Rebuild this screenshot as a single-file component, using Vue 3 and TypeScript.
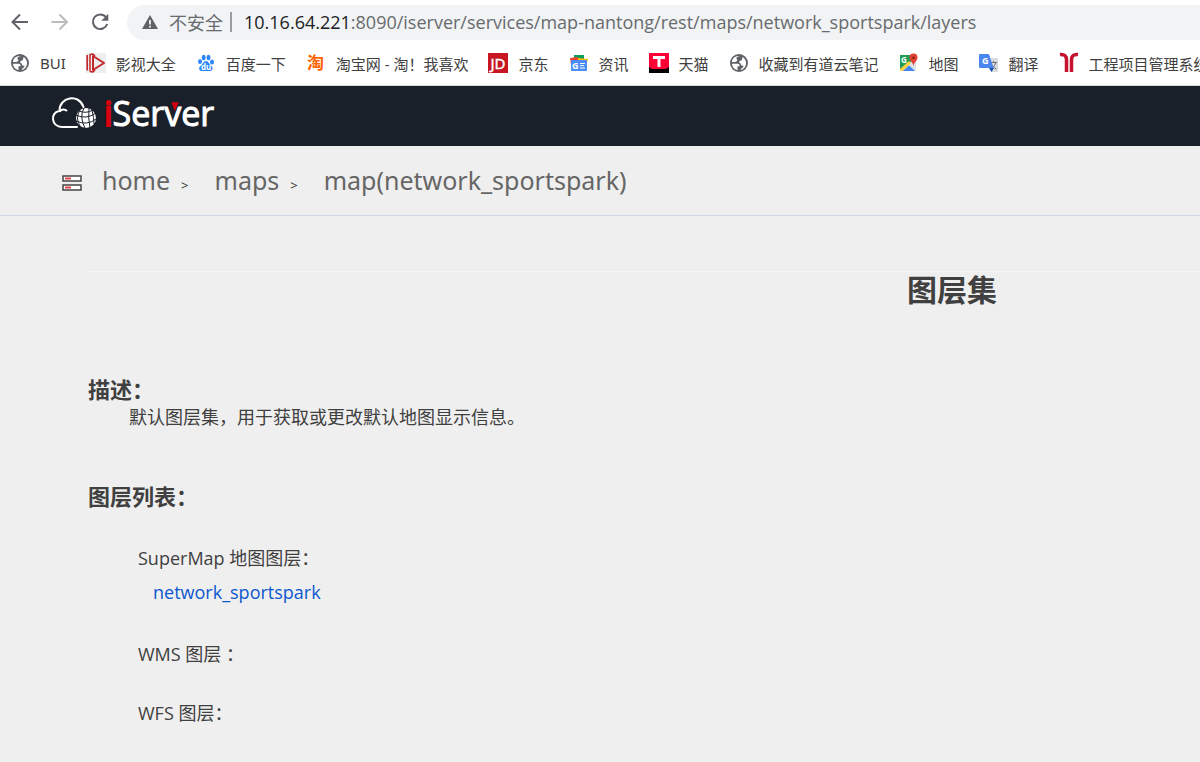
<script setup lang="ts">
interface Bookmark {
  icon: string
  label: string
}

const bookmarks: Bookmark[] = [
  { icon: 'globe', label: 'BUI' },
  { icon: 'video', label: '影视大全' },
  { icon: 'baidu', label: '百度一下' },
  { icon: 'taobao', label: '淘宝网 - 淘！我喜欢' },
  { icon: 'jd', label: '京东' },
  { icon: 'news', label: '资讯' },
  { icon: 'tmall', label: '天猫' },
  { icon: 'globe', label: '收藏到有道云笔记' },
  { icon: 'maps', label: '地图' },
  { icon: 'translate', label: '翻译' },
  { icon: 'project', label: '工程项目管理系统' },
]

const crumbs: string[] = ['home', 'maps', 'map(network_sportspark)']
</script>

<template>
  <div class="window">
    <div class="toolbar">
      <button class="nav" type="button" aria-label="后退">
        <svg width="20" height="20" viewBox="0 0 20 20" fill="none" stroke="#5f6368" stroke-width="2"><path d="M18 10H3M10 2.500L2.500 10L10 17.500" /></svg>
      </button>
      <button class="nav" type="button" aria-label="前进">
        <svg width="20" height="20" viewBox="0 0 20 20" fill="none" stroke="#babcbe" stroke-width="2"><path d="M1.500 10H16.500M9.500 2.500L17 10L9.500 17.500" /></svg>
      </button>
      <button class="nav" type="button" aria-label="重新加载">
        <svg width="20" height="20" viewBox="0 0 20 20"><path d="M16 5.200A7.300 7.300 0 1 0 17.200 12" fill="none" stroke="#5f6368" stroke-width="2" /><path d="M18.300 1.800V8.800H11.300Z" fill="#5f6368" /></svg>
      </button>
      <div class="address">
        <svg width="16" height="16" viewBox="0 0 16 16"><path d="M8 1L16 15H0Z" fill="#5f6368" /><path d="M8 6V10.500M8 11.800V13.500" stroke="#f1f3f4" stroke-width="1.800" /></svg>
        <span class="insecure">不安全</span>
        <span class="bar"></span>
        <span class="url"><b>10.16.64.221</b>:8090/iserver/services/map-nantong/rest/maps/network_sportspark/layers</span>
      </div>
    </div>

    <nav class="bookmarks" aria-label="书签">
      <a v-for="b in bookmarks" :key="b.label" href="#" class="bookmark">
        <svg width="20" height="20" viewBox="0 0 20 20" aria-hidden="true">
          <g v-if="b.icon === 'globe'">
            <circle cx="10" cy="10" r="9" fill="#5f6368" />
            <path d="M11 3C8 3.500 6.500 5.200 8 6.500C9.200 7.700 7 9 5.500 9H3C3 5.500 6 2.700 11 3ZM3 10.700H8.500C10.500 10.700 10.800 12 10.500 13.200H8.500V17C5.500 16.500 3.200 14 3 10.700ZM11.500 17C12 15 14.500 15 14.500 12.700H13C12 12.700 12.300 10.300 10.800 10C9.800 9.500 10 7.700 11.500 7.700C13.500 7.700 13 6 13.500 4C15.500 5 17 7.500 17 9.500C17.500 13.500 14 17 11.500 17Z" fill="#fff" />
          </g>
          <g v-else-if="b.icon === 'video'">
            <rect width="20" height="20" fill="#eee" />
            <g fill="none" stroke="#c3282d" stroke-linejoin="round">
              <path d="M7 3L18 10L7 17Z" stroke-width="2" />
              <path d="M4 18.500V1.500L7 1L9 3M4 18.500L7 19L9 17" stroke-width="1.500" />
              <path d="M1.200 2V17.500" stroke-width="1.700" />
            </g>
          </g>
          <g v-else-if="b.icon === 'baidu'" fill="#2b86fa">
            <ellipse cx="4" cy="8.500" rx="2" ry="2.600" />
            <ellipse cx="7.700" cy="4.500" rx="2" ry="2.700" />
            <ellipse cx="12.500" cy="4.500" rx="2" ry="2.700" />
            <ellipse cx="16" cy="9" rx="2" ry="2.500" />
            <path d="M10 8C12.500 8 13 11 15.500 13C18 15.500 16 18.500 13 18H7C3 18.500 2 15 4.500 13C7 11 7.500 8 10 8Z" />
            <text x="5" y="17" fill="#fff" font-size="8" font-weight="700">du</text>
          </g>
          <text v-else-if="b.icon === 'taobao'" x="1" y="16" fill="#ff6200" font-size="17" font-weight="700">淘</text>
          <g v-else-if="b.icon === 'jd'">
            <rect width="20" height="20" fill="#c81623" />
            <text x="10" y="16" text-anchor="middle" fill="#fff" stroke="#fff" stroke-width="0.400" font-size="15">JD</text>
          </g>
          <g v-else-if="b.icon === 'news'">
            <path d="M5 2H15V10H5Z" fill="#0c9d58" />
            <path d="M1 5L9 4V12H2Z" fill="#ea4335" />
            <path d="M9 5L19 6L17 13H9Z" fill="#fbbc04" />
            <rect x="2" y="7" width="16" height="11" rx="1" fill="#4a8cf8" />
            <text x="3" y="15.500" fill="#fff" font-size="9" font-weight="700">G</text>
            <path d="M11 10.500H16M11 12.700H15M11 15H16" stroke="#fff" />
          </g>
          <g v-else-if="b.icon === 'tmall'">
            <rect width="20" height="20" fill="#000" />
            <path d="M0 0H20V14L17 16H3L0 14Z" fill="#ff0036" />
            <path d="M4 3H16V6H11.500V14H8.500V6H4Z" fill="#fff" />
          </g>
          <g v-else-if="b.icon === 'maps'">
            <path d="M1 2H13L17 9V18H1Z" fill="#dce3e8" />
            <path d="M1 2H13L14 7L1 18Z" fill="#1e9b55" />
            <path d="M1 16L10 8L12 10L4 18H1Z" fill="#fdd247" />
            <path d="M4 18L10 12.500L16 18Z" fill="#4285f4" />
            <path d="M14.500 13C14 9 10.500 8 10.500 4.500A4 4 0 0 1 18.500 4.500C18.500 8 15 9 14.500 13Z" fill="#e34133" />
            <circle cx="14.500" cy="4.700" r="1.300" fill="#891d18" />
            <text x="2" y="9.500" fill="#fff" font-size="8" font-weight="700">G</text>
          </g>
          <g v-else-if="b.icon === 'translate'">
            <path d="M8 5H18Q19 5 19 6V18Q19 19 18 19H12Z" fill="#d9dcdf" />
            <path d="M11 9.500H18M14.500 8V10M16.500 10C16 13 14 14.500 12 15.500M12.500 11C13 13 15 15 17.500 16" fill="none" stroke="#70757a" />
            <path d="M10 15H15L12.500 19Z" fill="#1a4fb5" />
            <path d="M1 1H9Q10 1 10.300 2L14.500 15H1Q0 15 0 14V2Q0 1 1 1Z" fill="#4a86f0" />
            <text x="3" y="11" fill="#fff" font-size="9" font-weight="700">G</text>
          </g>
          <g v-else fill="none" stroke="#c4122f">
            <path d="M1 1.500C5.500 1 7.500 3 7.500 7V19M19 1.500C14.500 1 12.500 3 12.500 7V19" stroke-width="3.500" />
          </g>
        </svg>
        <span>{{ b.label }}</span>
      </a>
    </nav>

    <header class="brand">
      <svg width="170" height="50" viewBox="0 0 170 50" role="img" aria-label="iServer">
        <path d="M25 34H10C-1 34 -2 19 7.500 18C7 4 27 0 31.500 14" fill="none" stroke="#fff" stroke-width="2" stroke-linecap="round" />
        <path d="M7.500 18.500C10 15.500 13 16 15 18" fill="none" stroke="#fff" stroke-width="2" />
        <circle cx="34" cy="25" r="10" fill="#fff" />
        <path d="M24 22Q34 27 44 20M24 28Q35 33 44 26M27 18Q34 21 41 17M32 15Q27 24 33 35M37 15Q36 25 38 35M28 17Q23 25 28 33M40 17Q42 25 42 31" fill="none" stroke="#1a202a" />
        <text x="52" y="33" font-size="34" fill="#fff" stroke="#fff"><tspan fill="#d7000f" stroke="#d7000f" stroke-width="2">i</tspan>Server</text>
        <path d="M119 9H127L123 19Z" fill="#d7000f" stroke="#1a202a" stroke-width="0.500" />
      </svg>
    </header>

    <nav class="crumbs" aria-label="路径">
      <svg width="20" height="18" viewBox="0 0 20 18" aria-hidden="true">
        <g fill="#fff" stroke="#444" stroke-width="1.500"><rect x="1" y="2" width="18" height="5" /><rect x="1" y="11" width="18" height="5" /></g>
        <path d="M3 4.500H9M3 13.500H9" stroke="#e0444e" stroke-width="2" />
      </svg>
      <template v-for="(c, i) in crumbs" :key="c">
        <a href="#">{{ c }}</a>
        <span v-if="i < crumbs.length - 1" class="sep">&gt;</span>
      </template>
    </nav>

    <main class="content">
      <h1>图层集</h1>
      <section>
        <h2>描述：</h2>
        <p class="description">默认图层集，用于获取或更改默认地图显示信息。</p>
      </section>
      <section class="layers">
        <h2>图层列表：</h2>
        <div class="group">
          <h3>SuperMap 地图图层：</h3>
          <a href="#">network_sportspark</a>
        </div>
        <div class="group"><h3>WMS 图层 ：</h3></div>
        <div class="group"><h3>WFS 图层：</h3></div>
      </section>
    </main>
  </div>
</template>

<style>
html,
body {
  margin: 0;
  background: #efefef;
}
</style>

<style scoped>
.window {
  min-height: 100vh;
  overflow: hidden;
  background: #efefef;
  color: #404040;
  font-family: 'Open Sans', 'Noto Sans CJK SC', sans-serif;
}
a {
  color: inherit;
  text-decoration: none;
}
h1,
h2,
h3,
p {
  margin: 0;
}
svg {
  flex: none;
  overflow: visible;
}
.toolbar {
  display: flex;
  align-items: center;
  gap: 20px;
  height: 44px;
  padding-left: 10px;
  background: #fff;
}
.nav {
  display: flex;
  width: 20px;
  height: 20px;
  padding: 0;
  border: 0;
  background: none;
}
.address {
  display: flex;
  flex: 1;
  align-items: center;
  height: 35px;
  margin-left: -3px;
  padding-left: 15px;
  border-radius: 18px 0 0 18px;
  background: #f1f3f4;
  color: #686b6e;
  font-size: 18px;
  white-space: nowrap;
}
.insecure {
  margin-left: 11px;
}
.bar {
  width: 2px;
  height: 20px;
  margin: 0 12px 0 7px;
  background: #9b9ea1;
}
.url b {
  color: #202124;
  font-weight: 400;
}
.bookmarks {
  display: flex;
  align-items: center;
  gap: 20px;
  height: 41px;
  padding: 0 0 0 10px;
  border-bottom: 1px solid #d5d7da;
  background: #fff;
}
.bookmark {
  display: flex;
  flex: none;
  align-items: center;
  gap: 10px;
  height: 38px;
  margin-bottom: 3px;
  font-family: 'Noto Sans', 'Noto Sans CJK SC', sans-serif;
  font-size: 15px;
  white-space: nowrap;
}
.brand {
  display: flex;
  height: 60px;
  padding: 7px 52px 0;
  box-sizing: border-box;
  background: #1a202a;
}
.crumbs {
  display: flex;
  align-items: center;
  height: 69px;
  padding-left: 62px;
  border-bottom: 1px solid #cfd6e8;
  color: #666;
  font-family: 'Noto Sans', 'Noto Sans CJK SC', sans-serif;
  font-size: 25px;
}
.crumbs svg {
  margin-top: 4px;
}
.crumbs a {
  margin: 0 0 2px 20px;
}
.crumbs .sep {
  margin: 8px 6px 0 11px;
  color: #333;
  font-size: 13px;
}
.content {
  width: 144vw;
  margin: 55px 0 0 88px;
  border-top: 1px solid #f4f4fa;
}
h1 {
  font-size: 30px;
  line-height: 36px;
  text-align: center;
}
h2 {
  font-size: 22px;
  line-height: 30px;
}
section {
  margin-top: 66px;
}
.description {
  padding-left: 41px;
  font-size: 18px;
  line-height: 26px;
}
.layers {
  margin-top: 51px;
}
.group {
  margin: 28px 0 0 50px;
  font-size: 18px;
  line-height: 34px;
}
h2 + .group {
  margin-top: 30px;
}
.group + .group + .group {
  margin-top: 25px;
}
h3 {
  font-size: inherit;
  font-weight: 400;
}
.group a {
  margin-left: 15px;
  color: #0b57d0;
}
</style>
